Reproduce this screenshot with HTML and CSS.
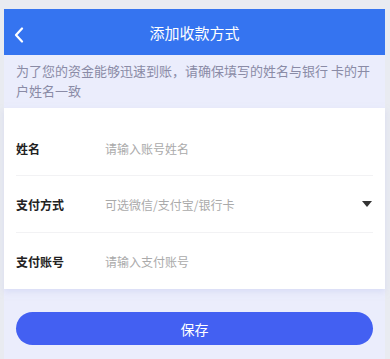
FILE: index.html
```html
<!DOCTYPE html>
<html lang="zh">
<head>
    <meta charset="UTF-8">
    <meta name="viewport" content="width=device-width, initial-scale=1.0">
    <title>添加收款方式</title>
    <link rel="stylesheet" href="styles.css">
</head>
<body>
    <div class="page">
        <div class="header">
            <span class="back">
                <svg width="10" height="16" viewBox="0 0 10 16"><path d="M8 1.5 L2 8 L8 14.5" fill="none" stroke="#fff" stroke-width="2.2" stroke-linecap="round" stroke-linejoin="round"/></svg>
            </span>
            <h1>添加收款方式</h1>
        </div>
        <p class="notice">为了您的资金能够迅速到账，请确保填写的姓名与银行 卡的开户姓名一致</p>
        <form class="card">
            <div class="row">
                <label>姓名</label>
                <input type="text" placeholder="请输入账号姓名">
            </div>
            <div class="row">
                <label>支付方式</label>
                <span class="select">可选微信/支付宝/银行卡</span>
                <span class="arrow"></span>
            </div>
            <div class="row">
                <label>支付账号</label>
                <input type="text" placeholder="请输入支付账号">
            </div>
        </form>
        <div class="actions">
            <button type="button" class="save">保存</button>
        </div>
    </div>
</body>
</html>
```

FILE: styles.css
```css
body {
    margin: 0;
    background-color: #e9ebf1;
    font-family: "Noto Sans CJK SC", "Noto Sans", sans-serif;
    padding: 9px 5px 0 4px;
}

.page {
    background-color: #ebedfc;
    min-height: 350px;
}

.header {
    position: relative;
    height: 46px;
    background-color: #3574f0;
    display: flex;
    align-items: center;
    justify-content: center;
}

.back {
    position: absolute;
    left: 10px;
    top: 15px;
}

.header h1 {
    margin: 0;
    color: #fff;
    font-size: 15px;
    font-weight: normal;
}

.notice {
    margin: 0;
    padding: 6px 12px 8px 12px;
    font-size: 13px;
    line-height: 20px;
    color: #8a8ba6;
    height: 39px;
}

.card {
    background-color: #fff;
    padding: 0 12px;
    margin: 0;
    box-shadow: 0 3px 6px rgba(200, 205, 240, 0.5);
}

.row {
    display: flex;
    align-items: center;
    height: 56px;
    border-bottom: 1px solid #f2f2f4;
}

.row:first-child {
    height: 68px;
    padding-top: 14px;
    box-sizing: border-box;
}

.row:last-child {
    border-bottom: none;
}

label {
    width: 89px;
    font-size: 12px;
    font-weight: bold;
    color: #222;
}

input, .select {
    flex: 1;
    border: none;
    outline: none;
    padding: 0;
    font-family: inherit;
    font-size: 12px;
    color: #aaa;
}

input::placeholder {
    color: #aaa;
}

.arrow {
    width: 0;
    height: 0;
    border-left: 5px solid transparent;
    border-right: 5px solid transparent;
    border-top: 6px solid #333;
    margin-right: 1px;
}

.actions {
    padding: 23px 12px 16px 12px;
}

.save {
    display: block;
    width: 100%;
    height: 33px;
    border: none;
    border-radius: 17px;
    background-color: #4360f2;
    color: #fff;
    font-family: inherit;
    font-size: 14px;
}
```
